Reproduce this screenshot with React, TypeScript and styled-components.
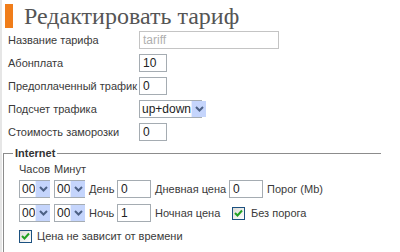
import React from "react";
import styled, { createGlobalStyle } from "styled-components";

const Global = createGlobalStyle`
  html, body { margin: 0; padding: 0; background: #fff; }
  body { font-family: "Liberation Sans", Arial, sans-serif; font-size: 11px; color: #3a3a3a; }
`;

const Page = styled.div`
  width: 400px;
  height: 252px;
  overflow: hidden;
  border-left: 2px solid #e6e6e6;
  box-sizing: border-box;
`;

const Header = styled.div`
  display: flex;
  align-items: center;
  height: 31px;
  padding-left: 3px;
  gap: 11px;
`;

const Bar = styled.div`
  width: 8px;
  height: 24px;
  background: #f07d1a;
`;

const Title = styled.h1`
  margin: 0;
  font-family: "Liberation Serif", "Times New Roman", serif;
  font-weight: normal;
  font-size: 24px;
  color: #555;
  line-height: 28px;
`;

const Form = styled.div`
  display: grid;
  grid-template-columns: 131px 1fr;
  row-gap: 5px;
  padding-left: 6px;
  align-items: center;
`;

const Label = styled.span`
  white-space: nowrap;
  line-height: 18px;
`;

const Input = styled.div<{ $w: number; $disabled?: boolean }>`
  box-sizing: border-box;
  width: ${(p) => p.$w}px;
  height: 18px;
  border: 1px solid ${(p) => (p.$disabled ? "#c4c4c4" : "#a5acb2")};
  color: ${(p) => (p.$disabled ? "#b0b0b0" : "#222")};
  padding-left: 3px;
  line-height: 16px;
  font-size: 12px;
  background: #fff;
`;

const SelectBox = styled.div<{ $w: number }>`
  box-sizing: border-box;
  width: ${(p) => p.$w}px;
  height: 18px;
  border: 1px solid #a5acb2;
  display: flex;
  align-items: stretch;
  background: #fff;
`;

const SelectText = styled.span`
  flex: 1;
  padding-left: 2px;
  line-height: 16px;
  font-size: 12px;
  color: #222;
  white-space: nowrap;
`;

const Arrow = styled.span`
  width: 14px;
  flex: none;
  background: #c5d5fc;
  border-left: 1px solid #e8eefc;
  display: flex;
  align-items: center;
  justify-content: center;
`;

const Select = ({ w, value }: { w: number; value: string }) => (
  <SelectBox $w={w}>
    <SelectText>{value}</SelectText>
    <Arrow>
      <svg width="9" height="6" viewBox="0 0 9 6">
        <path d="M1 1 L4.5 4.5 L8 1" fill="none" stroke="#4d6185" strokeWidth="2" />
      </svg>
    </Arrow>
  </SelectBox>
);

const Box = styled.span`
  box-sizing: border-box;
  width: 13px;
  height: 13px;
  flex: none;
  border: 1px solid #1c5180;
  background: linear-gradient(135deg, #dcdcd7, #fff);
  display: inline-flex;
  align-items: center;
  justify-content: center;
`;

const Check = () => (
  <Box>
    <svg width="9" height="9" viewBox="0 0 9 9">
      <path d="M1 4 L3.5 6.5 L8 1.5" fill="none" stroke="#21a121" strokeWidth="2" />
    </svg>
  </Box>
);

const Fieldset = styled.fieldset`
  margin: 6px 0 0 1px;
  width: 378px;
  box-sizing: border-box;
  border: 1px solid #8c8c8c;
  border-right: none;
  border-bottom: none;
  padding: 3px 0 20px 15px;
  min-height: 120px;
`;

const Legend = styled.legend`
  font-weight: bold;
  padding: 0 2px;
  margin-left: -6px;
  font-size: 11px;
  color: #333;
`;

const TimeGrid = styled.div`
  display: grid;
  grid-template-columns: 31px 31px 24px 34px 70px 34px auto;
  column-gap: 4px;
  row-gap: 6px;
  align-items: center;
  justify-items: start;
`;

const Head = styled.span`
  line-height: 14px;
  white-space: nowrap;
  margin-bottom: -2px;
`;

const CheckCell = styled.div`
  display: flex;
  align-items: center;
  gap: 6px;
  padding-left: 3px;
`;

const CheckRow = styled.div`
  display: flex;
  align-items: center;
  gap: 5px;
  margin-top: 5px;
`;

export default function App() {
  return (
    <Page>
      <Global />
      <Header>
        <Bar />
        <Title>Редактировать тариф</Title>
      </Header>
      <Form>
        <Label>Название тарифа</Label>
        <Input $w={140} $disabled>tariff</Input>
        <Label>Абонплата</Label>
        <Input $w={28}>10</Input>
        <Label>Предоплаченный трафик</Label>
        <Input $w={28}>0</Input>
        <Label>Подсчет трафика</Label>
        <Select w={63} value="up+down" />
        <Label>Стоимость заморозки</Label>
        <Input $w={28}>0</Input>
      </Form>
      <Fieldset>
        <Legend>Internet</Legend>
        <TimeGrid>
          <Head>Часов</Head>
          <Head>Минут</Head>
          <span />
          <span />
          <span />
          <span />
          <span />
          <Select w={31} value="00" />
          <Select w={31} value="00" />
          <Label>День</Label>
          <Input $w={34}>0</Input>
          <Label>Дневная цена</Label>
          <Input $w={34}>0</Input>
          <Label>Порог (Mb)</Label>
          <Select w={31} value="00" />
          <Select w={31} value="00" />
          <Label>Ночь</Label>
          <Input $w={34}>1</Input>
          <Label>Ночная цена</Label>
          <CheckCell style={{ gridColumn: "6 / 8" }}>
            <Check />
            <Label>Без порога</Label>
          </CheckCell>
        </TimeGrid>
        <CheckRow>
          <Check />
          <Label>Цена не зависит от времени</Label>
        </CheckRow>
      </Fieldset>
    </Page>
  );
}
